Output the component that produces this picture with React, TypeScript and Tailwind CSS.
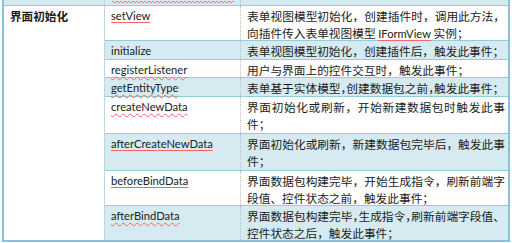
import React from 'react';

type Mark = 'solid' | 'wavy' | 'none';

interface Row {
  name: string;
  mark: Mark;
  lines: React.ReactNode[];
  h: string;
  shaded: boolean;
}

// a full-width comma drawn at half its advance
const C = () => <span className="tracking-[-0.5em]">，</span>;

const rows: Row[] = [
  {
    name: 'setView',
    mark: 'solid',
    shaded: false,
    h: 'h-[35px]',
    lines: [
      '表单视图模型初始化，创建插件时，调用此方法，',
      <>
        向插件传入表单视图模型{' '}
        <span className="font-['Lato',sans-serif] text-[11.2px] underline decoration-red-400 underline-offset-2">IFormView</span> 实例；
      </>,
    ],
  },
  {
    name: 'initialize',
    mark: 'none',
    shaded: true,
    h: 'h-[19px]',
    lines: ['表单视图模型初始化，创建插件后，触发此事件；'],
  },
  {
    name: 'registerListener',
    mark: 'wavy',
    shaded: false,
    h: 'h-[18px]',
    lines: ['用户与界面上的控件交互时，触发此事件；'],
  },
  {
    name: 'getEntityType',
    mark: 'wavy',
    shaded: true,
    h: 'h-[19px]',
    lines: [
      <>
        表单基于实体模型<C />创建数据包之前<C />触发此事件；
      </>,
    ],
  },
  {
    name: 'createNewData',
    mark: 'wavy',
    shaded: false,
    h: 'h-[37px]',
    lines: ['界面初始化或刷新，开始新建数据包时触发此事', '件；'],
  },
  {
    name: 'afterCreateNewData',
    mark: 'solid',
    shaded: true,
    h: 'h-[37px]',
    lines: ['界面初始化或刷新，新建数据包完毕后，触发此事', '件；'],
  },
  {
    name: 'beforeBindData',
    mark: 'solid',
    shaded: false,
    h: 'h-[35px]',
    lines: ['界面数据包构建完毕，开始生成指令，刷新前端字', '段值、控件状态之前，触发此事件；'],
  },
  {
    name: 'afterBindData',
    mark: 'wavy',
    shaded: true,
    h: 'h-[34px]',
    lines: [
      <>
        界面数据包构建完毕<C />生成指令<C />刷新前端字段值、
      </>,
      '控件状态之后，触发此事件；',
    ],
  },
];

const markClass: Record<Mark, string> = {
  solid: 'underline decoration-red-400 underline-offset-2',
  wavy: 'underline decoration-wavy decoration-red-400 underline-offset-2 decoration-1',
  none: '',
};

export default function App() {
  return (
    <div className="w-[512px] h-[243px] bg-white overflow-hidden font-['Noto_Sans_CJK_SC',sans-serif] text-[#1c1c1c]">
      <div className="ml-[2px] w-[508px] border-x-2 border-b-2 border-[#86c3d8]">
        {/* tail of the row above, cut by the screenshot */}
        <div className="flex h-[6px] bg-[#d6eaf1] border-b border-[#92cddc]">
          <div className="w-[101px] border-r border-[#bcd7e2]" />
          <div className="w-[136px] border-r border-dotted border-[#bdbdbd] pl-[7px]">
            <svg width="122" height="3" viewBox="0 0 122 3" className="block">
              <path
                d="M0 2 Q1 0 2 2 T4 2 T6 2 T8 2 T10 2 T12 2 T14 2 T16 2 T18 2 T20 2 T22 2 T24 2 T26 2 T28 2 T30 2 T32 2 T34 2 T36 2 T38 2 T40 2 T42 2 T44 2 T46 2 T48 2 T50 2 T52 2 T54 2 T56 2 T58 2 T60 2 T62 2 T64 2 T66 2 T68 2 T70 2 T72 2 T74 2 T76 2 T78 2 T80 2 T82 2 T84 2 T86 2 T88 2 T90 2 T92 2 T94 2 T96 2 T98 2 T100 2 T102 2 T104 2 T106 2 T108 2 T110 2 T112 2 T114 2 T116 2 T118 2 T120 2 T122 2"
                fill="none"
                stroke="#f08080"
                strokeWidth="1"
              />
            </svg>
          </div>
          <div className="flex-1" />
        </div>

        <div className="flex">
          <div className="w-[101px] shrink-0 border-r border-[#bcd7e2] bg-white pl-[6px] pt-[2px] text-[11.6px] font-bold leading-[17px]">
            界面初始化
          </div>
          <div className="flex-1">
            {rows.map((r, i) => (
              <div
                key={r.name}
                className={`flex ${r.h} ${i < rows.length - 1 ? 'border-b border-[#92cddc]' : ''} ${
                  r.shaded ? 'bg-[#d6eaf1]' : 'bg-white'
                }`}
              >
                <div className="w-[136px] shrink-0 border-r border-dotted border-[#bdbdbd] pl-[6px] pt-[1px] font-['Lato',sans-serif] text-[11.2px] leading-[17px] text-[#222]">
                  <span className={markClass[r.mark]}>{r.name}</span>
                </div>
                <div className="flex-1 pl-[6px] pr-[3px] pt-[1px] text-[11.7px] leading-[17px]">
                  {r.lines.map((l, j) => (
                    <div
                      key={j}
                      className={`whitespace-nowrap ${j < r.lines.length - 1 ? 'text-justify [text-align-last:justify]' : ''}`}
                    >
                      {l}
                    </div>
                  ))}
                </div>
              </div>
            ))}
          </div>
        </div>
      </div>
    </div>
  );
}
